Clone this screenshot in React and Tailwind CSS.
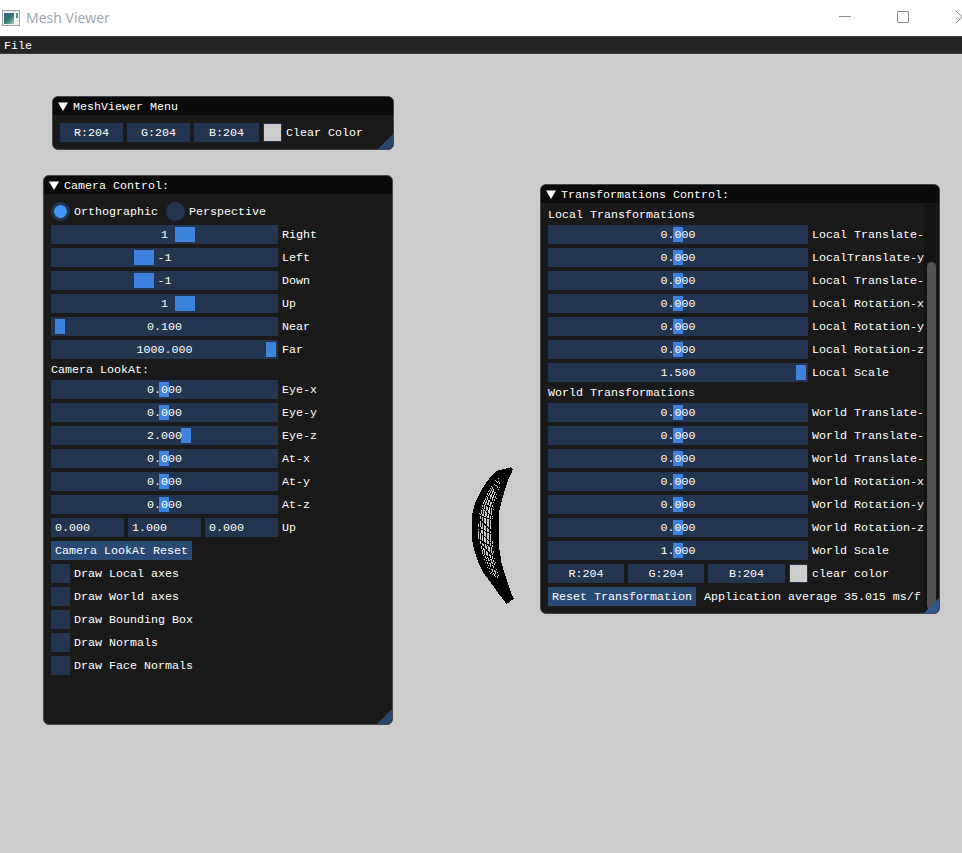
import React from 'react';

const font = "font-['Liberation_Mono','DejaVu_Sans_Mono',monospace] text-[11.67px] leading-[13px] text-white translate-y-px";

const cameraProjection = [
    { value: '1', label: 'Right', grab: 124, size: 20 },
    { value: '-1', label: 'Left', grab: 83, size: 20 },
    { value: '-1', label: 'Down', grab: 83, size: 20 },
    { value: '1', label: 'Up', grab: 124, size: 20 },
    { value: '0.100', label: 'Near', grab: 4, size: 10 },
    { value: '1000.000', label: 'Far', grab: 215, size: 10 },
];

const cameraLookAt = [
    { value: '0.000', label: 'Eye-x', grab: 108, size: 10 },
    { value: '0.000', label: 'Eye-y', grab: 108, size: 10 },
    { value: '2.000', label: 'Eye-z', grab: 130, size: 10 },
    { value: '0.000', label: 'At-x', grab: 108, size: 10 },
    { value: '0.000', label: 'At-y', grab: 108, size: 10 },
    { value: '0.000', label: 'At-z', grab: 108, size: 10 },
];

// labels are cut by the window's scroll area in the original, so they stop where it stops
const localRows = [
    { value: '0.000', label: 'Local Translate-', grab: 125 },
    { value: '0.000', label: 'LocalTranslate-y', grab: 125 },
    { value: '0.000', label: 'Local Translate-', grab: 125 },
    { value: '0.000', label: 'Local Rotation-x', grab: 125 },
    { value: '0.000', label: 'Local Rotation-y', grab: 125 },
    { value: '0.000', label: 'Local Rotation-z', grab: 125 },
    { value: '1.500', label: 'Local Scale', grab: 248 },
];

const worldRows = [
    { value: '0.000', label: 'World Translate-', grab: 125 },
    { value: '0.000', label: 'World Translate-', grab: 125 },
    { value: '0.000', label: 'World Translate-', grab: 125 },
    { value: '0.000', label: 'World Rotation-x', grab: 125 },
    { value: '0.000', label: 'World Rotation-y', grab: 125 },
    { value: '0.000', label: 'World Rotation-z', grab: 125 },
    { value: '1.000', label: 'World Scale', grab: 125 },
];

const checks = ['Draw Local axes', 'Draw World axes', 'Draw Bounding Box', 'Draw Normals', 'Draw Face Normals'];

function Grip({ light }) {
    return (
        <div className={`absolute right-0 bottom-0 w-[15px] h-[15px] [clip-path:polygon(100%_0,100%_100%,0_100%)] ${light ? 'bg-[#30598a]' : 'bg-[#28466b]'}`} />
    );
}

function ImWindow({ title, className, children, grip }) {
    return (
        <div className={`absolute flex flex-col overflow-hidden rounded-[6px] border border-[#44444c] bg-[#1a1a1a] ${className}`}>
            <div className="flex items-center h-[18px] shrink-0 bg-[#0a0a0a] pl-[5px]">
                <svg width="10" height="9" viewBox="0 0 10 9" className="mr-[5px] shrink-0">
                    <path d="M0 0.5H10L5 9Z" fill="#fff" />
                </svg>
                <span className={font}>{title}</span>
            </div>
            {children}
            <Grip light={grip === 'light'} />
        </div>
    );
}

function Slider({ value, grab, size = 10, className }) {
    return (
        <div className={`relative flex items-center justify-center h-[19px] shrink-0 bg-[#233550] ${className}`}>
            <div className="absolute top-[2px] h-[15px] bg-[#3d82dc]" style={{ left: grab, width: size }} />
            <span className={`relative ${font}`}>{value}</span>
        </div>
    );
}

function CameraRow({ row }) {
    return (
        <div className="flex items-center gap-[4px]">
            <Slider value={row.value} grab={row.grab} size={row.size} className="w-[227px]" />
            <span className={font}>{row.label}</span>
        </div>
    );
}

function TransformRow({ row }) {
    return (
        <div className="flex items-center gap-[4px]">
            <Slider value={row.value} grab={row.grab} className="w-[260px]" />
            <span className={`${font} whitespace-nowrap`}>{row.label}</span>
        </div>
    );
}

function ColorButton({ children, className }) {
    return (
        <div className={`flex items-center justify-center h-[19px] bg-[#233550] ${className}`}>
            <span className={font}>{children}</span>
        </div>
    );
}

function Swatch() {
    return <div className="w-[19px] h-[19px] bg-[#cccccc] border border-[#233550]" />;
}

function Radio({ selected, label }) {
    return (
        <div className="flex items-center gap-[4px]">
            <div className="flex items-center justify-center w-[19px] h-[19px] rounded-full bg-[#233550]">
                {selected && <div className="w-[13px] h-[13px] rounded-full bg-[#4296fa]" />}
            </div>
            <span className={font}>{label}</span>
        </div>
    );
}

// crescent outline: outer edge then inner edge, both top to bottom
const outer = [[510, 469], [498, 472], [490, 480], [483, 490], [477, 502], [474, 513], [473, 525], [473, 537], [476, 551], [480, 563], [486, 574], [493, 583], [500, 593], [507, 602]];
const inner = [[511, 470], [507, 479], [504, 488], [501, 498], [498, 510], [497, 522], [497, 537], [498, 550], [500, 563], [503, 573], [506, 582], [508, 588], [510, 594], [512, 598]];
const ringSteps = [0.06, 0.12, 0.18, 0.25, 0.33, 0.43, 0.55, 0.67, 0.76, 0.84, 0.92];

function Mesh() {
    const pts = (list) => list.map((p) => p.join(',')).join(' ');
    const mix = (t) => outer.map((p, i) => [p[0] + (inner[i][0] - p[0]) * t, p[1] + (inner[i][1] - p[1]) * t]);
    return (
        <svg width="962" height="799" viewBox="0 54 962 799" className="absolute left-0 top-0" shapeRendering="crispEdges">
            <polygon points={pts([...outer, ...inner.slice().reverse()])} fill="#cccccc" stroke="#000" strokeWidth="3" />
            {ringSteps.map((t) => (
                <polyline key={t} points={pts(mix(t))} fill="none" stroke="#000" strokeWidth={t < 0.2 || t > 0.8 ? 2 : 1} />
            ))}
            {outer.map((p, i) => (
                <line key={i} x1={p[0]} y1={p[1]} x2={inner[i][0]} y2={inner[i][1]} stroke="#000" strokeWidth={i < 3 || i > 10 ? 3 : 1} />
            ))}
            {outer.slice(0, -1).map((p, i) => (
                <line key={`d${i}`} x1={p[0]} y1={p[1]} x2={inner[i + 1][0]} y2={inner[i + 1][1]} stroke="#000" strokeWidth={i < 3 || i > 9 ? 3 : 1} />
            ))}
        </svg>
    );
}

function AppIcon() {
    return (
        <svg width="18" height="16" viewBox="0 0 18 16" className="shrink-0">
            <defs>
                <linearGradient id="icon-fill" x1="0" y1="0" x2="1" y2="1">
                    <stop offset="0" stopColor="#3a5f8a" />
                    <stop offset="0.5" stopColor="#2f7a6c" />
                    <stop offset="1" stopColor="#a8c8b8" />
                </linearGradient>
            </defs>
            <rect x="0.5" y="0.5" width="17" height="15" fill="#f2f2f2" stroke="#9aa0a0" />
            <rect x="2" y="3" width="10" height="11" fill="url(#icon-fill)" />
            <rect x="14" y="3" width="2" height="5" fill="#4f9a8c" />
        </svg>
    );
}

export default function App() {
    return (
        <div className="flex flex-col w-[962px] h-[853px] overflow-hidden bg-[#cccccc]">
            {/* win32 title bar */}
            <div className="relative flex items-center h-[36px] shrink-0 bg-white pl-[2px]">
                <AppIcon />
                <span className="ml-[6px] -translate-y-px font-['Noto_Sans',sans-serif] text-[14px] text-[#a3a9b0]">Mesh Viewer</span>
                <div className="absolute left-[839px] top-[16px] w-[12px] h-px bg-[#8c8c8c]" />
                <div className="absolute left-[897px] top-[11px] w-[12px] h-[12px] border border-[#8c8c8c] rounded-[1px]" />
                <svg width="6" height="12" viewBox="0 0 6 12" className="absolute left-[956px] top-[11px]">
                    <path d="M0 0L6 6L0 12" fill="none" stroke="#8c8c8c" />
                </svg>
            </div>

            {/* main menu bar */}
            <div className="flex items-center h-[18px] shrink-0 bg-[#242424] border-y border-[#3c3c40] pl-[4px]">
                <span className={font}>File</span>
            </div>

            <div className="relative flex-1">
                <Mesh />

                <ImWindow title="MeshViewer Menu" className="left-[52px] top-[42px] w-[342px] h-[54px]">
                    <div className="flex items-center gap-[4px] pl-[7px] pt-[8px]">
                        <ColorButton className="w-[63px]">R:204</ColorButton>
                        <ColorButton className="w-[63px]">G:204</ColorButton>
                        <ColorButton className="w-[65px]">B:204</ColorButton>
                        <Swatch />
                        <span className={font}>Clear Color</span>
                    </div>
                </ImWindow>

                <ImWindow title="Camera Control:" className="left-[43px] top-[121px] w-[350px] h-[550px]">
                    <div className="flex flex-col gap-[4px] pl-[7px] pt-[8px]">
                        <div className="flex items-center gap-[8px]">
                            <Radio selected label="Orthographic" />
                            <Radio label="Perspective" />
                        </div>
                        {cameraProjection.map((row) => <CameraRow key={row.label} row={row} />)}
                        <div className={font}>Camera LookAt:</div>
                        {cameraLookAt.map((row) => <CameraRow key={row.label} row={row} />)}
                        <div className="flex items-center gap-[4px]">
                            {['0.000', '1.000', '0.000'].map((v, i) => (
                                <div key={i} className="flex items-center w-[73px] h-[19px] bg-[#233550] pl-[4px]">
                                    <span className={font}>{v}</span>
                                </div>
                            ))}
                            <span className={font}>Up</span>
                        </div>
                        <div className="flex items-center justify-center w-[141px] h-[19px] bg-[#294a73]">
                            <span className={font}>Camera LookAt Reset</span>
                        </div>
                        {checks.map((label) => (
                            <div key={label} className="flex items-center gap-[4px]">
                                <div className="w-[19px] h-[19px] bg-[#233550]" />
                                <span className={font}>{label}</span>
                            </div>
                        ))}
                    </div>
                </ImWindow>

                <ImWindow title="Transformations Control:" className="left-[540px] top-[130px] w-[400px] h-[430px]" grip="light">
                    <div className="flex flex-1 min-h-0">
                        <div className="flex flex-col gap-[4px] w-[384px] pl-[7px] pt-[5px]">
                            <div className={font}>Local Transformations</div>
                            {localRows.map((row, i) => <TransformRow key={i} row={row} />)}
                            <div className={font}>World Transformations</div>
                            {worldRows.map((row, i) => <TransformRow key={i} row={row} />)}
                            <div className="flex items-center gap-[4px]">
                                <ColorButton className="w-[76px]">R:204</ColorButton>
                                <ColorButton className="w-[76px]">G:204</ColorButton>
                                <ColorButton className="w-[77px]">B:204</ColorButton>
                                <Swatch />
                                <span className={font}>clear color</span>
                            </div>
                            <div className="flex items-center gap-[8px]">
                                <div className="flex items-center justify-center shrink-0 w-[148px] h-[19px] bg-[#294a73]">
                                    <span className={font}>Reset Transformation</span>
                                </div>
                                <span className={`${font} whitespace-nowrap`}>Application average 35.015 ms/f</span>
                            </div>
                        </div>
                        <div className="flex flex-col justify-end w-[15px] shrink-0 bg-[#141414] px-[3px] pb-[3px]">
                            <div className="h-[348px] rounded-[5px] bg-[#515151]" />
                        </div>
                    </div>
                </ImWindow>
            </div>
        </div>
    );
}
